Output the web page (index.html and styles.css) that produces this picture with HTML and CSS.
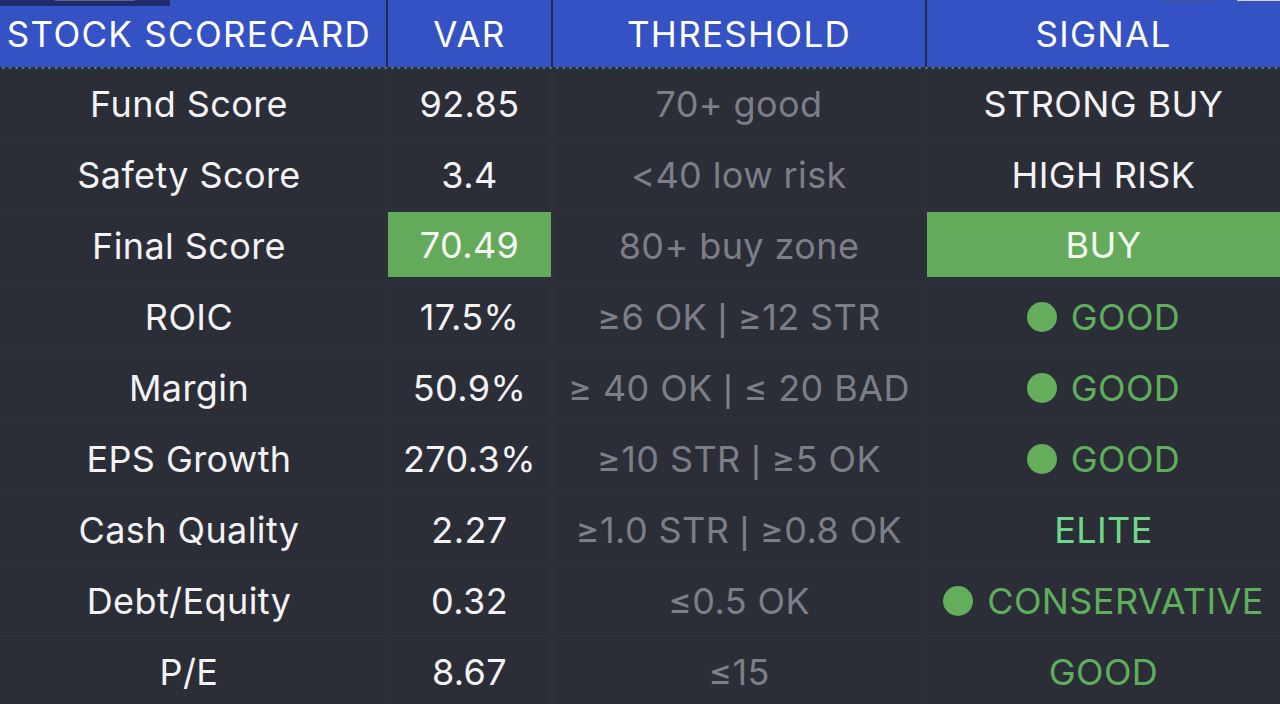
FILE: index.html
```html
<!DOCTYPE html>
<html>
<head>
<meta charset="utf-8">
<link rel="stylesheet" href="styles.css">
</head>
<body>
<div class="sheet">
  <div class="topbar"><span class="topbar-inner"></span></div>
  <div class="topright"><span class="tr-grey"></span><span class="tr-white"></span></div>
  <div class="grid">
    <div class="hd lbl">STOCK SCORECARD</div>
    <div class="hd">VAR</div>
    <div class="hd">THRESHOLD</div>
    <div class="hd">SIGNAL</div>

    <div class="c lbl">Fund Score</div>
    <div class="c val">92.85</div>
    <div class="c thr">70+ good</div>
    <div class="c sig">STRONG BUY</div>

    <div class="c lbl">Safety Score</div>
    <div class="c val">3.4</div>
    <div class="c thr">&lt;40 low risk</div>
    <div class="c sig">HIGH RISK</div>

    <div class="c lbl">Final Score</div>
    <div class="c val"><span class="fill">70.49</span></div>
    <div class="c thr">80+ buy zone</div>
    <div class="c sig"><span class="fill">BUY</span></div>

    <div class="c lbl">ROIC</div>
    <div class="c val">17.5%</div>
    <div class="c thr"><span>≥6 OK <span class="pipe">|</span> ≥12 STR</span></div>
    <div class="c sig good"><span class="dot"></span>GOOD</div>

    <div class="c lbl">Margin</div>
    <div class="c val">50.9%</div>
    <div class="c thr"><span>≥ 40 OK <span class="pipe">|</span> ≤ 20 BAD</span></div>
    <div class="c sig good"><span class="dot"></span>GOOD</div>

    <div class="c lbl">EPS Growth</div>
    <div class="c val">270.3%</div>
    <div class="c thr"><span>≥10 STR <span class="pipe">|</span> ≥5 OK</span></div>
    <div class="c sig good"><span class="dot"></span>GOOD</div>

    <div class="c lbl">Cash Quality</div>
    <div class="c val">2.27</div>
    <div class="c thr"><span>≥1.0 STR <span class="pipe">|</span> ≥0.8 OK</span></div>
    <div class="c sig elite">ELITE</div>

    <div class="c lbl">Debt/Equity</div>
    <div class="c val">0.32</div>
    <div class="c thr">≤0.5 OK</div>
    <div class="c sig good"><span class="dot"></span>CONSERVATIVE</div>

    <div class="c lbl">P/E</div>
    <div class="c val">8.67</div>
    <div class="c thr">≤15</div>
    <div class="c sig good">GOOD</div>
  </div>
</div>
</body>
</html>
```
FILE: styles.css
```css
html, body {
  margin: 0;
  padding: 0;
  background: #2c2e37;
  overflow: hidden;
}
.sheet {
  position: relative;
  width: 1280px;
  height: 704px;
  overflow: hidden;
  font-family: Inter, Roboto, "Liberation Sans", sans-serif;
  font-size: 36px;
  letter-spacing: 0.4px;
  color: #f3f3f5;
}
.topbar {
  position: absolute;
  left: 0;
  top: 0;
  width: 170px;
  height: 6px;
  background: #1f2b6c;
  z-index: 2;
}
.topbar-inner {
  position: absolute;
  left: 55px;
  top: 0;
  width: 80px;
  height: 1px;
  background: #5c6489;
}
.topright {
  position: absolute;
  right: 0;
  top: 0;
  width: 120px;
  height: 2px;
  z-index: 2;
}
.tr-grey {
  position: absolute;
  left: 3px;
  top: 0;
  width: 50px;
  height: 1px;
  background: #4a558f;
}
.tr-white {
  position: absolute;
  right: 0;
  top: 0;
  width: 43px;
  height: 1px;
  background: #cfd4ea;
}
.grid {
  position: relative;
  display: grid;
  grid-template-columns: 386px 163px 372px 353px;
  grid-template-rows: 67px repeat(9, 71px);
  column-gap: 2px;
  background: #2e3039;
}
.hd {
  background: #3452c3;
  color: #ffffff;
  display: flex;
  align-items: center;
  justify-content: center;
  font-size: 35px;
  letter-spacing: 1.3px;
  padding-top: 1px;
  box-shadow: 2px 0 0 #252b4c;
  white-space: nowrap;
}
.grid::after {
  content: "";
  position: absolute;
  left: 0;
  top: 67px;
  width: 1280px;
  height: 2px;
  background-image: radial-gradient(circle, #4f9c98 0.9px, transparent 1.2px);
  background-size: 6.6px 2px;
  background-color: #2c2e37;
}
.c {
  background: #2c2e37;
  display: flex;
  align-items: center;
  justify-content: center;
  margin-top: 2px;
  white-space: nowrap;
}
.lbl {
  padding-right: 8px;
}
.thr {
  color: #7c7e88;
}
.pipe {
  font-family: "Liberation Sans", sans-serif;
  font-weight: 300;
}
.fill {
  align-self: stretch;
  flex: 1;
  margin: 1px 0 3px;
  background: #63ab5a;
  display: flex;
  align-items: center;
  justify-content: center;
  color: #f6f8f4;
}
.good {
  color: #5fae5b;
}
.elite {
  color: #6fd98a;
}
.dot {
  width: 30px;
  height: 30px;
  border-radius: 50%;
  background: #63ad5b;
  margin-right: 14px;
}
```
